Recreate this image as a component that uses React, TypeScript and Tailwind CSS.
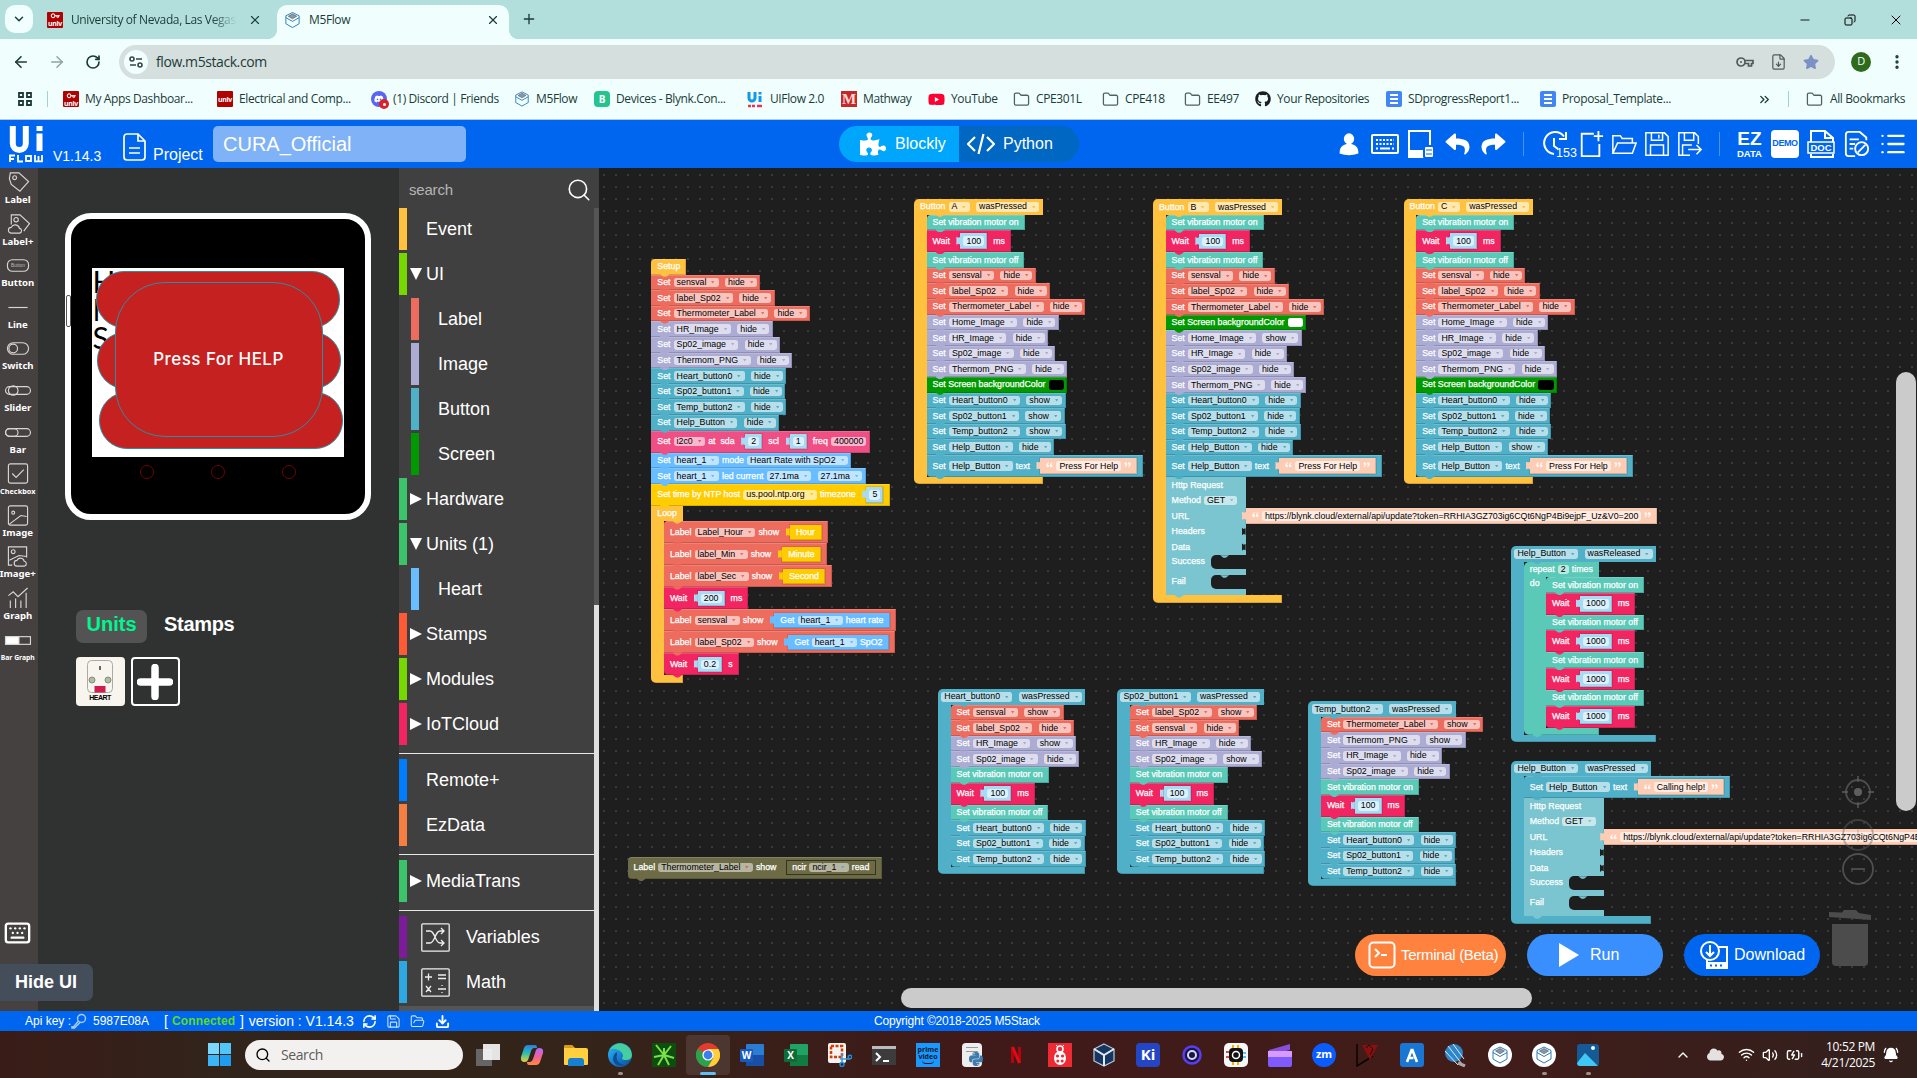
import React, { type ReactNode } from "react";
import {
  ArrowLeft, ArrowRight, RotateCw, X, Plus, Minus, ChevronDown, ChevronUp, Copy, KeyRound, FileDown, Folder, FolderOpen, Save,
  Search, Keyboard, List, Download, RefreshCw, Wifi, Volume2, BellRing, BatteryCharging, Key, EllipsisVertical, ChevronsRight,
} from "lucide-react";
import { FaPuzzlePiece, FaGithub, FaDiscord, FaYoutube, FaStar, FaReply, FaShare, FaPython, FaCloud } from "react-icons/fa";

/* ---------- Blockly palette ---------- */
type Hue = "event" | "red" | "purple" | "teal" | "vib" | "wait" | "green" | "i2c" | "heart" | "ntp" | "http" | "off";
const HUES: Record<Hue, { bg: string; fg: string }> = {
  event: { bg: "bg-[#ffc23f]", fg: "text-[#ffc23f]" },
  red: { bg: "bg-[#ed6c5e]", fg: "text-[#ed6c5e]" },
  purple: { bg: "bg-[#ababd4]", fg: "text-[#ababd4]" },
  teal: { bg: "bg-[#4fb0c8]", fg: "text-[#4fb0c8]" },
  vib: { bg: "bg-[#5bc9b8]", fg: "text-[#5bc9b8]" },
  wait: { bg: "bg-[#f02562]", fg: "text-[#f02562]" },
  green: { bg: "bg-[#009a00]", fg: "text-[#009a00]" },
  i2c: { bg: "bg-[#ef4f85]", fg: "text-[#ef4f85]" },
  heart: { bg: "bg-[#67bdff]", fg: "text-[#67bdff]" },
  ntp: { bg: "bg-[#ffcc00]", fg: "text-[#ffcc00]" },
  http: { bg: "bg-[#7ac5cf]", fg: "text-[#7ac5cf]" },
  off: { bg: "bg-[#6c6b45]", fg: "text-[#e0604f]" },
};
const BEVEL = "shadow-[inset_-1px_-1px_0_rgba(0,0,0,0.16),inset_0_1px_0_rgba(255,255,255,0.16)]";

const L = ({ children }: { children: ReactNode }) => (
  <span className="whitespace-pre text-white first-of-type:ml-[2.7px] last-of-type:mr-[2.7px] [-webkit-text-stroke:0.25px_white]">{children}</span>
);
const F = ({ children, c = "teal", arrow = true, next = false, dim = false }: { children: ReactNode; c?: Hue; arrow?: boolean; next?: boolean; dim?: boolean }) => (
  <span className={`flex h-[9.6px] items-center whitespace-pre rounded-[2.4px] pl-[3px] text-black ${dim ? "bg-white/50" : "bg-white/60"} ${next ? "ml-[3.2px]" : ""} ${arrow ? "" : "pr-[3px]"}`}>
    {children}
    {arrow && (
      <svg viewBox="0 0 4 3" className={`ml-[5px] mr-[4px] h-[2.6px] w-[3.4px] ${HUES[c].fg}`}><path d="M0 0h4L2 3z" fill="currentColor" /></svg>
    )}
  </span>
);
const Val = ({ children, bg, pad = "px-[3px]" }: { children: ReactNode; bg: string; pad?: string }) => (
  <span className={`relative ml-[7.4px] mr-[2.8px] flex h-[15.6px] items-center gap-[3px] ${pad} ${bg} shadow-[inset_-1px_-1px_0_rgba(0,0,0,0.15),0_0_0_0.6px_rgba(0,0,0,0.15)]`}>
    <i className={`absolute -left-[4px] top-[3.4px] h-[8px] w-[4.2px] [clip-path:polygon(0_0,50%_12%,100%_0,100%_100%,50%_88%,0_100%)] ${bg}`} />
    {children}
  </span>
);
const Num = ({ children }: { children: ReactNode }) => (
  <Val bg="bg-[#a7dbf4]"><span className="flex h-[9.6px] items-center rounded-[2.4px] bg-white/60 px-[3.2px] text-black">{children}</span></Val>
);
const Quote = ({ d = false }: { d?: boolean }) => (
  <svg viewBox="0 0 8 6" className={`h-[5.5px] w-[7px] -translate-y-[1px] ${d ? "rotate-180" : ""}`}>
    <path d="M3.2.2C1.3.8.3 2 .3 3.8.3 5 1 5.8 2 5.8c.9 0 1.5-.6 1.5-1.4 0-.9-.6-1.4-1.5-1.4C2 2 2.500 1.300 3.500.9zM7.200.2C5.300.8 4.300 2 4.300 3.800c0 1.200.7 2 1.700 2 .9 0 1.500-.6 1.500-1.400 0-.9-.6-1.400-1.500-1.400C6 2 6.500 1.300 7.500.9z" fill="#fff" fillOpacity=".85" />
  </svg>
);
const Txt = ({ children }: { children: ReactNode }) => (
  <Val bg="bg-[#fccdb4]" pad="px-[6px]"><Quote /><span className="flex h-[9.6px] items-center whitespace-pre rounded-[2.4px] bg-white/60 px-[3px] text-black">{children}</span><Quote d /></Val>
);
const Knob = ({ bg, at = "left-[9px]" }: { bg: string; at?: string }) => (
  <i className={`absolute top-full z-10 -mt-px h-[3.2px] w-[9px] ${at} ${bg} [clip-path:polygon(0_0,100%_0,100%_30%,64%_100%,36%_100%,0_30%)]`} />
);
const Row = ({ c, children, tall = false, top = false, end = false }: { c: Hue; children: ReactNode; tall?: boolean; top?: boolean; end?: boolean }) => (
  <div className={`relative flex items-center gap-[3.1px] px-[3.3px] ${tall ? "h-[22px]" : "h-[15.6px]"} ${HUES[c].bg} ${BEVEL} ${top ? "rounded-tl-[4px]" : ""} ${end ? "rounded-bl-[4px]" : ""}`}>
    {children}
    <Knob bg={HUES[c].bg} />
  </div>
);

/* "name:state" pairs become "Set [name] [state]" rows */
const SetRow = ({ c, v }: { c: Hue; v: string }) => {
  const [name, state] = v.split(":");
  return <Row c={c}><L>Set</L><F c={c}>{name}</F><F c={c} next>{state}</F></Row>;
};
const Sets = ({ c, items }: { c: Hue; items: string[] }) => <>{items.map((v) => <SetRow key={v} c={c} v={v} />)}</>;
const Vib = ({ on }: { on: boolean }) => <Row c="vib"><L>{on ? "Set vibration motor on" : "Set vibration motor off"}</L></Row>;
const Wait = ({ n = "100", u = "ms" }: { n?: string; u?: string }) => <Row c="wait" tall><L>Wait</L><Num>{n}</Num><L>{u}</L></Row>;
const Buzz = () => <><Vib on /><Wait /><Vib on={false} /></>;
const ScreenBg = ({ white = false }: { white?: boolean }) => (
  <Row c="green"><L>Set Screen backgroundColor</L><span className={`h-[9.600px] w-[15.500px] rounded-[2.4px] ${white ? "bg-white" : "bg-black"}`} /></Row>
);
const HelpText = ({ t }: { t: string }) => <Row c="teal" tall><L>Set</L><F>Help_Button</F><L>text</L><Txt>{t}</Txt></Row>;

const Wrap = ({ c, head, children, top = true, inner = false, side }: { c: Hue; head: ReactNode; children: ReactNode; top?: boolean; inner?: boolean; side?: ReactNode }) => (
  <div className="relative grid w-fit grid-cols-[auto_auto]">
    <div className={`relative col-span-2 flex h-[15.6px] w-fit items-center gap-[3.1px] px-[3.3px] ${HUES[c].bg} ${top ? "rounded-tl-[5px]" : ""}`}>
      {head}
      <Knob bg={HUES[c].bg} at={inner ? "left-[31px]" : "left-[21.500px]"} />
    </div>
    <div className="col-span-2 flex">
      <div className={`shrink-0 ${inner ? "w-[22.300px]" : "w-[12.600px]"} ${HUES[c].bg}`}>{side}</div>
      <div className="flex flex-col items-start [&>*:first-child]:rounded-tl-[4px] [&>*:last-child]:rounded-bl-[4px]">{children}</div>
    </div>
    <div className={`relative h-[7.2px] overflow-visible rounded-bl-[5px] ${HUES[c].bg} shadow-[inset_-1px_-1px_0_rgba(0,0,0,0.16)]`}>
      <div className="invisible flex h-0 items-center gap-[3.1px] overflow-hidden px-[3.3px]" aria-hidden>{head}</div>
      {inner && <Knob bg={HUES[c].bg} />}
    </div>
  </div>
);

const URL_TEXT = "https://blynk.cloud/external/api/update?token=RRHIA3GZ703ig6CQt6NgP4Bi9ejpF_Uz&V0=200";
const Slot = ({ name }: { name: string }) => (
  <div className="flex h-[20.100px] flex-col">
    <div className="flex h-[13.4px]">
      <div className="w-[45.500px] bg-[#7ac5cf] pl-[3.300px] pt-[2px]"><L>{name}</L></div>
      <div className="relative h-[13.4px] flex-1 overflow-hidden bg-[#7ac5cf]">
        <div className="h-full w-[60px] rounded-l-[5px] bg-[#1e1e1e]" />
        <i className="absolute left-[9px] top-0 h-[2.500px] w-[9px] bg-[#7ac5cf] [clip-path:polygon(0_0,100%_0,64%_100%,36%_100%)]" />
      </div>
    </div>
    <div className="h-[6.7px] bg-[#7ac5cf]" />
  </div>
);
const Http = () => (
  <div className="relative flex w-[80px] flex-col overflow-visible">
    {["Http Request", "Method", "URL", "Headers", "Data"].map((n) => (
      <div key={n} className="relative flex h-[15.600px] items-center gap-[3px] bg-[#7ac5cf] px-[3.3px]">
        <L>{n}</L>
        {n === "Method" && <F c="http">GET</F>}
        {(n === "Headers" || n === "Data") && <i className="absolute right-0 top-[3.500px] h-[8px] w-[4px] bg-[#1e1e1e] [clip-path:polygon(0_0,50%_20%,100%_10%,100%_90%,50%_80%,0_100%)]" />}
        {n === "URL" && <div className="absolute left-[73px] top-0 z-20 tracking-[-0.015px]"><Txt>{URL_TEXT}</Txt></div>}
      </div>
    ))}
    <Slot name="Success" />
    <Slot name="Fail" />
    <Knob bg="bg-[#7ac5cf]" />
  </div>
);

const At = ({ x, children }: { x: string; children: ReactNode }) => <div className={`absolute w-max ${x}`}>{children}</div>;
const ev = (b: string) => <><L>Button</L><F c="event">{b}</F><F c="event" next>wasPressed</F></>;
const bev = (b: string, e = "wasPressed") => <><F>{b}</F><F next>{e}</F></>;
const ShowVal = ({ l, children }: { l: string; children: ReactNode }) => <Row c="red" tall><L>Label</L><F c="red">{l}</F><L>show</L>{children}</Row>;
const Reset = ["sensval:hide", "label_Sp02:hide", "Thermometer_Label:hide"];
const Buttons = ["Heart_button0:hide", "Sp02_button1:hide", "Temp_button2:hide"];

const Scripts = () => (
  <div className="absolute inset-0 font-['Liberation_Sans',sans-serif] text-[8.8px] leading-none">
    <At x="left-[52.3px] top-[91px]">
      <div className="flex flex-col items-start">
        <Row c="event" top><L>Setup</L></Row>
        <Sets c="red" items={Reset} />
        <Sets c="purple" items={["HR_Image:hide", "Sp02_image:hide", "Thermom_PNG:hide"]} />
        <Sets c="teal" items={[...Buttons, "Help_Button:hide"]} />
        <Row c="i2c" tall><L>Set</L><F c="i2c">i2c0</F><L>at  sda</L><Num>2</Num><L>scl</L><Num>1</Num><L>freq</L><F arrow={false}>400000</F></Row>
        <Row c="heart"><L>Set</L><F c="heart">heart_1</F><L>mode</L><F c="heart">Heart Rate with SpO2</F></Row>
        <Row c="heart"><L>Set</L><F c="heart">heart_1</F><L>led current</L><F c="heart">27.1ma</F><F c="heart" next>27.1ma</F></Row>
        <Row c="ntp" tall><L>Set time by NTP host</L><F c="ntp">us.pool.ntp.org</F><L>timezone</L><Num>5</Num></Row>
        <Wrap c="event" top={false} head={<L>Loop</L>}>
          <ShowVal l="Label_Hour"><Val pad="px-[3.800px]" bg="bg-[#ffcc00]"><L>Hour</L></Val></ShowVal>
          <ShowVal l="label_Min"><Val pad="px-[3.800px]" bg="bg-[#ffcc00]"><L>Minute</L></Val></ShowVal>
          <ShowVal l="label_Sec"><Val pad="px-[3.800px]" bg="bg-[#ffcc00]"><L>Second</L></Val></ShowVal>
          <Wait n="200" />
          <ShowVal l="sensval"><Val pad="px-[3.800px]" bg="bg-[#67bdff]"><L>Get</L><F c="heart">heart_1</F><L>heart rate</L></Val></ShowVal>
          <ShowVal l="label_Sp02"><Val pad="px-[3.800px]" bg="bg-[#67bdff]"><L>Get</L><F c="heart">heart_1</F><L>SpO2</L></Val></ShowVal>
          <Wait n="0.2" u="s" />
        </Wrap>
      </div>
    </At>
    <At x="left-[315px] top-[31px]">
      <Wrap c="event" head={ev("A")}>
        <Buzz /><Sets c="red" items={Reset} />
        <Sets c="purple" items={["Home_Image:hide", "HR_Image:hide", "Sp02_image:hide", "Thermom_PNG:hide"]} />
        <ScreenBg />
        <Sets c="teal" items={["Heart_button0:show", "Sp02_button1:show", "Temp_button2:show", "Help_Button:hide"]} />
        <HelpText t="Press For Help" />
      </Wrap>
    </At>
    <At x="left-[554px] top-[31.3px]">
      <Wrap c="event" head={ev("B")}>
        <Buzz /><Sets c="red" items={Reset} />
        <ScreenBg white />
        <Sets c="purple" items={["Home_Image:show", "HR_Image:hide", "Sp02_image:hide", "Thermom_PNG:hide"]} />
        <Sets c="teal" items={[...Buttons, "Help_Button:hide"]} />
        <HelpText t="Press For Help" />
        <Http />
      </Wrap>
    </At>
    <At x="left-[804.6px] top-[31px]">
      <Wrap c="event" head={ev("C")}>
        <Buzz /><Sets c="red" items={Reset} />
        <Sets c="purple" items={["Home_Image:hide", "HR_Image:hide", "Sp02_image:hide", "Thermom_PNG:hide"]} />
        <ScreenBg />
        <Sets c="teal" items={[...Buttons, "Help_Button:show"]} />
        <HelpText t="Press For Help" />
      </Wrap>
    </At>
    <At x="left-[912.2px] top-[378px]">
      <Wrap c="teal" head={bev("Help_Button", "wasReleased")}>
        <Wrap c="vib" inner side={<div className="pl-[3.300px] pt-[2px]"><L>do</L></div>} head={<><L>repeat</L><F arrow={false}>2</F><L>times</L></>}>
          <Vib on /><Wait n="1000" /><Vib on={false} /><Wait n="1000" /><Vib on /><Wait n="1000" /><Vib on={false} /><Wait n="1000" />
        </Wrap>
      </Wrap>
    </At>
    <At x="left-[912.2px] top-[592.7px]">
      <Wrap c="teal" head={bev("Help_Button")}><HelpText t="Calling help!" /><Http /></Wrap>
    </At>
    <At x="left-[339px] top-[521px]">
      <Wrap c="teal" head={bev("Heart_button0")}>
        <Sets c="red" items={["sensval:show", "label_Sp02:hide"]} /><Sets c="purple" items={["HR_Image:show", "Sp02_image:hide"]} />
        <Buzz /><Sets c="teal" items={Buttons} />
      </Wrap>
    </At>
    <At x="left-[518.2px] top-[521px]">
      <Wrap c="teal" head={bev("Sp02_button1")}>
        <Sets c="red" items={["label_Sp02:show", "sensval:hide"]} /><Sets c="purple" items={["HR_Image:hide", "Sp02_image:show"]} />
        <Buzz /><Sets c="teal" items={Buttons} />
      </Wrap>
    </At>
    <At x="left-[709.3px] top-[533.3px]">
      <Wrap c="teal" head={bev("Temp_button2")}>
        <Sets c="red" items={["Thermometer_Label:show"]} /><Sets c="purple" items={["Thermom_PNG:show", "HR_Image:hide", "Sp02_image:hide"]} />
        <Buzz /><Sets c="teal" items={Buttons} />
      </Wrap>
    </At>
    <At x="left-[28.6px] top-[688.7px]">
      <Row c="off" tall top end>
        <L>Label</L><F c="off" dim>Thermometer_Label</F><L>show</L>
        <span className="ml-[6px] mr-[2.700px] flex h-[15.600px] items-center gap-[3px] border border-[#34341f] bg-[#6c6b45] px-[3px]"><L>ncir</L><F c="teal" dim>ncir_1</F><L>read</L></span>
      </Row>
    </At>
  </div>
);

/* ---------- Browser chrome ---------- */
const UI_FONT = "font-['Open_Sans',sans-serif] tracking-[-0.38px]";
const Unlv = ({ k = true }: { k?: boolean }) => (
  <span className="flex h-4 w-4 shrink-0 flex-col items-center justify-center rounded-[1px] bg-[#b10202] text-[7px] font-bold leading-[7px] tracking-[-0.3px] text-white">
    {k && <Key className="h-2 w-2.5 rotate-45" strokeWidth={3} />}unlv
  </span>
);
const Cube = ({ s = "h-[18px] w-[17px]" }: { s?: string }) => (
  <svg viewBox="0 0 18 18" className={`shrink-0 ${s}`} fill="none" stroke="#2a7ab8">
    <path d="M9 1l7 3.500v8.500l-7 4-7-4V4.500z" /><path d="M2 6.500l7 4 7-4" /><path d="M9 2.500l4.500 2.500L9 7.700 4.500 5z" fill="#8b98a3" stroke="#56626e" strokeWidth=".7" />
  </svg>
);
const UiMark = () => (
  <svg viewBox="0 0 17 17" className="h-[17px] w-[17px] shrink-0"><path d="M2 1v6a3 3 0 006 0V1M13 5v6" fill="none" stroke="#1397e8" strokeWidth="3" /><rect x="11.500" y="1" width="3" height="2.500" fill="#1397e8" /><path d="M1 15h3m1 0h3m2 0h5" stroke="#e8315b" strokeWidth="2.500" /></svg>
);
const GDoc = () => <span className="flex h-4 w-4 shrink-0 flex-col items-center justify-center gap-[2px] rounded-[2px] bg-[#4285f4]"><i className="h-[2px] w-2 bg-white" /><i className="h-[2px] w-2 bg-white" /><i className="h-[2px] w-2 bg-white" /></span>;
const Fold = () => <Folder className="h-[17px] w-[17px] shrink-0 text-[#4c6361]" strokeWidth={1.8} />;

const BOOKMARKS: { w: string; icon: ReactNode; t: string }[] = [
  { w: "w-[154px]", icon: <Unlv />, t: "My Apps Dashboar..." },
  { w: "w-[154px]", icon: <Unlv k={false} />, t: "Electrical and Comp..." },
  { w: "w-[143px]", icon: <span className="relative flex h-4 w-4 items-center justify-center rounded-full bg-[#5865f2]"><FaDiscord className="h-2.5 w-2.5 text-white" /><i className="absolute -bottom-0.5 -right-0.5 flex h-[10px] w-[10px] items-center justify-center rounded-full bg-[#d8232a]"><i className="h-[3px] w-[3px] rounded-full bg-white" /></i></span>, t: "(1) Discord | Friends" },
  { w: "w-[80px]", icon: <Cube s="h-4 w-4" />, t: "M5Flow" },
  { w: "w-[153px]", icon: <span className="flex h-4 w-4 items-center justify-center rounded-[4px] bg-[#23c48e] text-[10px] font-bold tracking-normal text-white">B</span>, t: "Devices - Blynk.Con..." },
  { w: "w-[94px]", icon: <UiMark />, t: "UIFlow 2.0" },
  { w: "w-[87px]", icon: <span className="flex h-4 w-4 items-center justify-center bg-[#c62828] font-['Liberation_Serif',serif] text-[15px] font-bold text-[#ffd9d9]">M</span>, t: "Mathway" },
  { w: "w-[85px]", icon: <FaYoutube className="h-[17px] w-[17px] text-[#ff0033]" />, t: "YouTube" },
  { w: "w-[89px]", icon: <Fold />, t: "CPE301L" },
  { w: "w-[82px]", icon: <Fold />, t: "CPE418" },
  { w: "w-[71px]", icon: <Fold />, t: "EE497" },
  { w: "w-[131px]", icon: <FaGithub className="h-4 w-4 text-[#1b1f23]" />, t: "Your Repositories" },
  { w: "w-[154px]", icon: <GDoc />, t: "SDprogressReport1..." },
  { w: "w-[160px]", icon: <GDoc />, t: "Proposal_Template..." },
];

const Chrome = () => (
  <div className={`shrink-0 text-[12px] text-[#1c3b38] ${UI_FONT}`}>
    <div className="flex h-[39px] bg-[#b2dfdb]">
      <div className="ml-[5px] mt-[5px] flex h-7 w-7 items-center justify-center rounded-[10px] bg-[#f0fffe]"><ChevronDown className="h-3.5 w-3.5" strokeWidth={2.500} /></div>
      <div className="ml-[14px] flex h-[39px] w-[221px] items-center">
        <Unlv /><span className="ml-2 w-[166px] overflow-hidden whitespace-nowrap [mask-image:linear-gradient(to_right,black_85%,transparent)]">University of Nevada, Las Vegas</span>
        <X className="ml-[11px] h-3.5 w-3.5" strokeWidth={2} />
      </div>
      <div className="relative ml-[9px] mt-[5px] flex h-[34px] w-[232px] items-center rounded-t-[10px] bg-[#f0fffe] pb-1 pl-[7px]">
        <i className="absolute -left-[10px] bottom-0 h-[10px] w-[10px] bg-[radial-gradient(circle_at_0_0,#b2dfdb_10px,#f0fffe_10.500px)]" />
        <i className="absolute -right-[10px] bottom-0 h-[10px] w-[10px] bg-[radial-gradient(circle_at_100%_0,#b2dfdb_10px,#f0fffe_10.500px)]" />
        <Cube /><span className="ml-2">M5Flow</span><X className="ml-auto mr-[9px] h-3.5 w-3.5" strokeWidth={2} />
      </div>
      <Plus className="ml-[12px] mt-[11px] h-4 w-4" strokeWidth={2} />
      <div className="ml-auto mr-[13px] flex items-center gap-[32px] text-black">
        <Minus className="h-3.5 w-3.5" strokeWidth={1.500} />
        <Copy className="h-3 w-3 -scale-x-100" strokeWidth={2} />
        <X className="h-4 w-4" strokeWidth={1.500} />
      </div>
    </div>
    <div className="flex h-[45px] items-center bg-[#f0fffe]">
      <ArrowLeft className="ml-3 h-[18px] w-[18px]" strokeWidth={2.200} /><ArrowRight className="ml-[18px] h-[18px] w-[18px] text-[#8da5a3]" strokeWidth={2} /><RotateCw className="ml-[19px] h-4 w-4" strokeWidth={2.500} />
      <div className="ml-[18px] flex h-[34px] w-[1716px] items-center rounded-full bg-[#d5dfde] pl-[5px] pr-4">
        <span className="flex h-6 w-6 items-center justify-center rounded-full bg-[#f0fffe]">
          <svg viewBox="0 0 14 14" className="h-3.5 w-3.5" fill="none" stroke="#3a4443" strokeWidth="1.600"><circle cx="3" cy="4" r="2" /><path d="M7 4h6M1 10h6" /><circle cx="11" cy="10" r="2" /></svg>
        </span>
        <span className="ml-2 text-[14px] tracking-[-0.420px]">flow.m5stack.com</span>
        <div className="ml-auto flex items-center gap-[16px] text-[#4f5b5a]">
          <svg viewBox="0 0 18 12" className="h-[12px] w-[18px]" fill="none" stroke="currentColor" strokeWidth="1.700"><circle cx="5" cy="6" r="4" /><path d="M9 4.500h8v3h-1.500V10h-3V7.500H9" /><circle cx="5" cy="6" r="1" fill="currentColor" stroke="none" /></svg>
          <FileDown className="h-[18px] w-[17px]" strokeWidth={1.700} /><FaStar className="h-4 w-4 text-[#7b91c4]" />
        </div>
      </div>
      <span className="ml-4 flex h-5 w-5 items-center justify-center rounded-full bg-[#2f6b1d] text-[11px] text-white">D</span>
      <EllipsisVertical className="ml-[17px] h-[18px] w-[18px]" strokeWidth={2.500} />
    </div>
    <div className="flex h-[36px] items-center border-b border-[#b7c9d2] bg-[#f0fffe] pb-[5px]">
      <svg viewBox="0 0 14 14" className="ml-[18px] h-[14px] w-[14px]" fill="none" stroke="#1c3b38" strokeWidth="1.800"><path d="M1 1h4v4H1zM9 1h4v4H9zM1 9h4v4H1zM9 9h4v4H9z" /></svg>
      <i className="ml-[15px] mr-[15px] h-4 w-px bg-[#a4d3cf]" />
      {BOOKMARKS.map((b) => <div key={b.t} className={`flex shrink-0 items-center gap-1.5 whitespace-nowrap ${b.w}`}>{b.icon}<span>{b.t}</span></div>)}
      <ChevronsRight className="ml-[57px] h-[15px] w-[15px]" strokeWidth={2.200} />
      <i className="ml-[16px] mr-[17px] h-4 w-px bg-[#a4d3cf]" />
      <Fold /><span className="ml-[7px] whitespace-nowrap">All Bookmarks</span>
    </div>
  </div>
);

/* ---------- UIFlow header ---------- */
const SV = ({ x, children }: { x: string; children: ReactNode }) => <svg viewBox="0 0 28 28" className={`h-7 shrink-0 ${x}`} fill="none" stroke="#fff" strokeWidth="2">{children}</svg>;
const Header = () => (
  <header className="flex h-[48px] shrink-0 items-center bg-[#0066ef] font-['Liberation_Sans',sans-serif] text-white">
    <svg viewBox="0 0 34 38" className="ml-[9px] h-[38px] w-[34px]" fill="none" stroke="#fff">
      <path d="M3.800 1v17.500a5.500 5.500 0 0013 0V1" strokeWidth="6" /><path d="M30.500 8.500V26" strokeWidth="6" /><path d="M27.500 3.500h6" strokeWidth="5" />
      <path d="M1 37v-6.500h5M1 34h4M9 30v6.500h5M17 31h5v5h-5zM26 30v6.300h7V30M29.500 36v-5" strokeWidth="1.800" />
    </svg>
    <span className="ml-[10px] w-[50px] pt-[23px] text-[14px] leading-none">V1.14.3</span>
    <svg viewBox="0 0 23 28" className="ml-[20px] mt-1.5 h-[28px] w-[23px]" fill="none" stroke="#fff" strokeWidth="1.700"><path d="M15 1H4a3 3 0 00-3 3v20a3 3 0 003 3h15a3 3 0 003-3V8zM15 1v7h7M6 15h11M6 20h11" /></svg>
    <span className="ml-[7px] w-[50px] pt-[22px] text-[16px] leading-none">Project</span>
    <div className="ml-[10px] flex h-9 w-[253px] items-center rounded-[5px] bg-[#80b2f7] pl-[10px] text-[20px]">CURA_Official</div>
    <div className="ml-[373px] flex h-9 w-[240px] overflow-hidden rounded-full text-[16px]">
      <div className="flex w-[120px] items-center bg-[#00a6fb] pl-[21px]"><FaPuzzlePiece className="h-[26px] w-[26px]" /><span className="ml-[9px]">Blockly</span></div>
      <div className="flex flex-1 items-center bg-[#0068c2] pl-[8px]">
        <svg viewBox="0 0 28 24" className="h-[24px] w-[28px]" fill="none" stroke="#fff" strokeWidth="2.200"><path d="M8 5l-7 7 7 7M20 5l7 7-7 7M16.500 2l-5 20" /></svg>
        <span className="ml-[8px]">Python</span>
      </div>
    </div>
    <div className="ml-[258px] flex items-center">
      <SV x="w-[24px]"><ellipse cx="14" cy="8" rx="6" ry="6.500" fill="#fff" stroke="none" /><path d="M3 25c0-8 4-11 11-11s11 3 11 11q-11 4-22 0z" fill="#fff" stroke="none" /></SV>
      <SV x="ml-[10px] w-[28px]"><rect x="1" y="5" width="26" height="18" rx="1" /><path d="M5 10h18M5 14h18" strokeDasharray="2 1.500" strokeWidth="2.200" /><path d="M5 18.500h2m2 0h10m2 0h2" /></SV>
      <SV x="ml-[8px] w-[28px]"><path d="M2 1h21v26H2z" /><path d="M2 21h21v6H2z" fill="#fff" /><rect x="17" y="16" width="10" height="12" rx="2" fill="#fff" stroke="#0066ef" /><path d="M19 20h6M19 24h6" stroke="#0066ef" strokeWidth="1.200" /></SV>
      <FaReply className="ml-[10px] h-[24px] w-[25px]" /><FaShare className="ml-[11px] h-[24px] w-[25px]" />
      <i className="ml-[17px] h-6 w-px bg-[#4d92f3]" />
      <div className="relative ml-[18px] w-[36px]">
        <SV x="w-[28px]"><path d="M12 24A11 11 0 1122 6.500M24 2v7h-7M12 8v8l4 3" /></SV>
        <span className="absolute left-[14px] top-[17px] text-[12.500px] leading-none">153</span>
      </div>
      <SV x="w-[26px]"><path d="M17 3H4v24h19V14M22 0v11M17 5.500h10" /></SV>
      <SV x="ml-[7px] w-[26px]"><path d="M2 24V5h8l2 3h11v5M2 24l5-11h20l-4 11z" strokeWidth="1.600" /></SV>
      <SV x="ml-[7px] w-[26px]"><path d="M2 2h20l4 4v20H2zM8 2v8h12V2M16 4v4M7 26V15h14v11" strokeWidth="1.600" /></SV>
      <SV x="ml-[7px] w-[26px]"><path d="M14 26H2V2h17l4 4v8M8 2v8h10V2M6 26V15h10M12 20h14M21 15l5 5-5 5" strokeWidth="1.600" /></SV>
      <i className="ml-[16px] h-6 w-px bg-[#4d92f3]" />
      <span className="ml-[16px] flex w-[27px] flex-col items-center leading-none"><b className="text-[19px] leading-[16px]">EZ</b><span className="mt-[2px] text-[9.500px] font-bold leading-[9px]">DATA</span></span>
      <span className="ml-[8px] flex h-[28px] w-[28px] items-center justify-center rounded-[4px] bg-white text-[9px] font-bold tracking-[-0.400px] text-[#0066ef]">DEMO</span>
      <div className="relative ml-[8px] w-[28px]">
        <SV x="w-[28px]"><path d="M4 12V1h14l8 7v4M4 24v3h22v-3M18 1v7h8" /><rect x="1" y="12" width="26" height="11" fill="#0066ef" strokeWidth="1.500" /></SV>
        <span className="absolute left-0 top-[13px] w-full text-center text-[9.500px] font-bold leading-none">DOC</span>
      </div>
      <SV x="ml-[9px] w-[26px]"><path d="M12 27H5a3 3 0 01-3-3V4a3 3 0 013-3h12l7 6v3M6 9h10M6 14h6M6 19h4" /><circle cx="19" cy="19" r="7" /><path d="M15 23l8-8" /></SV>
      <List className="ml-[9px] h-[30px] w-[28px]" strokeWidth={2} />
    </div>
  </header>
);

/* ---------- Left side ---------- */
const tool = "fill-none stroke-[#d8d6d5] [stroke-width:1.2]";
const TOOLS: { t: string; s?: string; d: ReactNode }[] = [
  { t: "Label", d: <><path d="M5 8l1-6h9l10 9-9 10-9-7z" /><circle cx="10.500" cy="7" r="2" /></> },
  { t: "Label+", d: <><path d="M7 12V2h9l10 9-6 8" /><circle cx="12" cy="7" r="2.300" /><path d="M7 21a3 3 0 010-6 4.500 4.500 0 018.500 1 2.600 2.600 0 01.5 5z" /></> },
  { t: "Button", d: <><rect x="3" y="6" width="22" height="12" rx="5" /><text x="14" y="14" fontSize="5" textAnchor="middle" stroke="none" fill="#bbb">Button</text></> },
  { t: "Line", d: <path d="M4 12h20" /> },
  { t: "Switch", d: <><rect x="3" y="6" width="22" height="12" rx="6" /><circle cx="9" cy="12" r="4.500" /></> },
  { t: "Slider", d: <><rect x="1" y="8" width="26" height="8" rx="4" /><circle cx="9" cy="12" r="5" /></> },
  { t: "Bar", d: <><rect x="1" y="8" width="26" height="8" rx="4" /><rect x="1" y="8" width="13" height="8" rx="4" /></> },
  { t: "Checkbox", s: "text-[7.300px]", d: <><rect x="4" y="2" width="20" height="20" rx="2" /><path d="M8 12l4 4 8-8" /></> },
  { t: "Image", d: <><rect x="4" y="2" width="20" height="20" rx="2" /><circle cx="9" cy="9" r="1.500" /><path d="M5 21l12-9 6 1" /></> },
  { t: "Image+", d: <><path d="M8 21H4V2h19v11" /><circle cx="9" cy="7" r="2" /><path d="M5 16l10-5 8 1" /><path d="M13 22a3 3 0 010-6 4 4 0 017.500 1 2.600 2.600 0 01.5 5z" /></> },
  { t: "Graph", d: <path d="M6 22v-8M11.500 22V12M17 22v-8M22.500 22V6M4 9l5-4 5 5 10-9" /> },
  { t: "Bar Graph", s: "text-[6.800px]", d: <><rect x="1" y="8" width="26" height="8" /><rect x="1" y="8" width="14" height="8" fill="#fff" /></> },
];

const Simulator = () => (
  <div className="relative flex h-[307px] w-[306px] flex-col items-center rounded-[26px] border-[6px] border-white bg-black pt-[49px]">
    <i className="absolute -left-[5px] top-[76px] h-[32px] w-[5px] rounded-[2px] border border-[#555] bg-white" />
    <div className="relative h-[189px] w-[252px] overflow-hidden bg-white">
      <div className="absolute left-[1px] top-[-1px] flex flex-col font-['Lato',sans-serif] text-[30px] leading-[28px] text-black"><span>H</span><span>M</span><span>S</span></div>
      <i className="absolute left-[4px] top-[3px] h-[57px] w-[244px] rounded-[28px] border border-[#2a8fa0] bg-[#c62121]" />
      <i className="absolute left-[5px] top-[64px] h-[57px] w-[244px] rounded-[28px] border border-[#2a8fa0] bg-[#c62121]" />
      <i className="absolute left-[7px] top-[124px] h-[57px] w-[244px] rounded-[28px] border border-[#2a8fa0] bg-[#c62121]" />
      <div className="absolute left-[23px] top-[14px] flex h-[155px] w-[208px] items-center justify-center rounded-[50px] border border-[#2a8fa0] bg-[#c62121] font-['Inter',sans-serif] text-[17px] font-medium tracking-[0.450px] text-white">Press For HELP</div>
    </div>
    <div className="mt-[8px] flex gap-[57px]">{[0, 1, 2].map((i) => <i key={i} className="h-[14px] w-[14px] rounded-full border-[1.500px] border-[#6d0505]" />)}</div>
  </div>
);

type Cat = { t: string; bg: string; arrow?: "d" | "r"; sub?: boolean; icon?: ReactNode };
const CATS: (Cat | null)[] = [
  { t: "Event", bg: "bg-[#ffc23f]" },
  { t: "UI", bg: "bg-[#76d800]", arrow: "d" },
  { t: "Label", bg: "bg-[#ed6c5e]", sub: true },
  { t: "Image", bg: "bg-[#ababd4]", sub: true },
  { t: "Button", bg: "bg-[#4fb0c8]", sub: true },
  { t: "Screen", bg: "bg-[#009a00]", sub: true },
  { t: "Hardware", bg: "bg-[#3cc46b]", arrow: "r" },
  { t: "Units (1)", bg: "bg-[#3cc46b]", arrow: "d" },
  { t: "Heart", bg: "bg-[#67bdff]", sub: true },
  { t: "Stamps", bg: "bg-[#ff5a36]", arrow: "r" },
  { t: "Modules", bg: "bg-[#76d800]", arrow: "r" },
  { t: "IoTCloud", bg: "bg-[#f02562]", arrow: "r" },
  null,
  { t: "Remote+", bg: "bg-[#007dff]" },
  { t: "EzData", bg: "bg-[#f57e42]" },
  null,
  { t: "MediaTrans", bg: "bg-[#3cc46b]", arrow: "r" },
  null,
  { t: "Variables", bg: "bg-[#7b1c99]", icon: <path d="M5 8h4c5 0 5 12 10 12h4M5 20h4c5 0 5-12 10-12h4M20 5l3 3-3 3M20 17l3 3-3 3" /> },
  { t: "Math", bg: "bg-[#2ea8e0]", icon: <path d="M4 9h7M7.500 5.500v7M17 7h8M17 10.500h8M5 18l5 6M10 18l-5 6M17 21h8M21 17v1M21 24v1" /> },
];

const LeftSide = () => (
  <div className="relative flex shrink-0 font-['Liberation_Sans',sans-serif] text-white">
    <div className="flex w-[37.500px] flex-col items-center bg-[#464141] pr-[2px]">
      {TOOLS.map((x) => (
        <div key={x.t} className="flex h-[41.600px] w-full shrink-0 flex-col items-center pt-[3px]">
          <svg viewBox="0 0 28 24" className={`h-[23px] w-[28px] shrink-0 ${tool}`}>{x.d}</svg>
          <span className={`whitespace-nowrap font-['Noto_Sans',sans-serif] font-bold leading-[12px] ${x.s ?? "text-[9.600px]"}`}>{x.t}</span>
        </div>
      ))}
      <Keyboard className="mt-[252px] h-[28px] w-[33px] shrink-0" strokeWidth={2} />
    </div>
    <div className="w-[361.500px] bg-[#303231]">
      <div className="pl-[27px] pt-[45px]"><Simulator /></div>
      <div className="mt-[90px] flex pl-[38.500px] text-[20px] font-bold leading-none">
        <span className="flex h-[33px] w-[71px] items-start justify-center rounded-[7px] bg-[#535353] pt-[4px] text-[#00f78f]">Units</span>
        <span className="ml-[17px] pt-[4px] tracking-[-0.300px]">Stamps</span>
      </div>
      <div className="mt-[14px] flex gap-[6px] pl-[38px]">
        <div className="flex h-[49px] w-[49px] flex-col items-center rounded-[4px] bg-[#f8f4ee] pt-[3px]">
          <svg viewBox="0 0 26 33" className="h-[33px] w-[26px]"><rect x=".5" y=".5" width="25" height="32" rx="4" fill="none" stroke="#aaa" /><rect x="12" y="6" width="2" height="4" fill="#666" /><circle cx="5" cy="20" r="3" fill="#aabf9a" stroke="#888" /><circle cx="21" cy="20" r="3" fill="#aabf9a" stroke="#888" /><rect x="7.500" y="26" width="11" height="6.500" fill="#d01c4f" /></svg>
          <b className="text-[7px] leading-[9px] tracking-[-0.500px] text-black">HEART</b>
        </div>
        <div className="flex h-[49px] w-[49px] items-center justify-center rounded-[4px] border-2 border-white"><svg viewBox="0 0 36 36" className="h-9 w-9 shrink-0"><path d="M18 3.500v29M3.500 18h29" stroke="#fff" strokeWidth="7.500" strokeLinecap="round" /></svg></div>
      </div>
    </div>
    <div className="flex w-[200px] flex-col bg-[#404040]">
      <div className="flex h-[40px] shrink-0 items-center pl-[10px] text-[15px] text-[#b5b5b5]"><span className="mt-1 tracking-[-0.200px]">search</span><Search className="ml-auto mr-[7px] mt-[4px] h-[26px] w-[26px] text-white" strokeWidth={1.500} /></div>
      <div className="flex min-h-0 flex-1">
        <div className="flex w-[195px] flex-col">
          {CATS.map((c, i) => c === null ? <hr key={i} className="mb-[5px] mt-[5px] h-px shrink-0 border-0 bg-[#e8e8e8]" /> : (
            <div key={c.t} className={`mb-[3px] flex h-[42px] shrink-0 items-center text-[18px] ${c.sub ? "pl-[12px]" : ""}`}>
              <i className={`h-full w-[8px] ${c.bg}`} />
              <span className="flex w-[19px] items-center pl-[3px]">
                {c.arrow && <svg viewBox="0 0 12 12" className={`h-[12px] w-[12px] ${c.arrow === "d" ? "rotate-90" : ""}`}><path d="M0 0l12 6-12 6z" fill="#fff" /></svg>}
              </span>
              {c.icon && <svg viewBox="0 0 29 29" className="-ml-[5px] mr-[16px] h-[29px] w-[29px]" fill="none" stroke="#eee" strokeWidth="1.300"><rect x=".8" y=".8" width="27.400" height="27.400" rx="1" />{c.icon}</svg>}
              {c.t}
            </div>
          ))}
          <div className="flex-1 bg-[#555]" />
        </div>
        <div className="flex-1 bg-[#555] pt-[397px]"><div className="h-full bg-[#dfdfdf]" /></div>
      </div>
    </div>
    <div className="absolute bottom-[10px] left-0 flex h-[37px] w-[93px] items-center rounded-r-[7px] bg-[#434e5a] pl-[15px] text-[18px] font-bold">Hide UI</div>
  </div>
);

const Canvas = () => (
  <main className="relative flex-1 overflow-hidden bg-[#1e1e1e] bg-[radial-gradient(circle,#3a3a3a_0.700px,transparent_1.100px)] bg-[length:12px_12px] bg-[position:-1px_1px]">
    <Scripts />
    <svg viewBox="0 0 34 120" className="absolute right-[42px] top-[606px] z-30 h-[120px] w-[34px] opacity-90" fill="none" stroke="#666" strokeOpacity=".75" strokeWidth="1.800">
      <circle cx="17" cy="18" r="12" /><circle cx="17" cy="18" r="4" fill="#666" stroke="none" /><path d="M17 2v6M17 28v6M1 18h6M27 18h6" />
      <circle cx="17" cy="61" r="15" strokeOpacity=".5" /><path d="M10 61h14M17 54v14" strokeOpacity=".25" /><circle cx="17" cy="95" r="15" /><path d="M10 95h14" />
    </svg>
    <svg viewBox="0 0 42 58" className="absolute right-[46px] top-[741px] h-[58px] w-[42px]" fill="#4c4c4c"><path d="M0 3l13 .500L15 1h12l3 3 12 2v5L0 8zM3 15h36v38a4 4 0 01-4 4H7a4 4 0 01-4-4z" /></svg>
    <div className="absolute right-[97px] top-[766px] z-30 flex gap-[21px] font-['Liberation_Sans',sans-serif] text-[16px] text-white">
      <div className="flex h-[42px] w-[151px] items-center rounded-full bg-[#ff833f] pl-[13px] text-[15px]"><svg viewBox="0 0 28 28" className="h-7 w-7 shrink-0" fill="none" stroke="#fff" strokeWidth="2"><rect x="1.500" y="1.500" width="25" height="25" rx="4" /><path d="M7 8l4 4-4 4M13 14h6" /></svg><span className="ml-[5px] whitespace-nowrap tracking-[-0.300px]">Terminal (Beta)</span></div>
      <div className="flex h-[42px] w-[136px] items-center rounded-full bg-[#3a8fff] pl-[32px]"><svg viewBox="0 0 20 24" className="h-6 w-5"><path d="M0 0l20 12L0 24z" fill="#fff" /></svg><span className="ml-[11px]">Run</span></div>
      <div className="flex h-[42px] w-[136px] items-center rounded-full bg-[#0066ef] pl-[16px]"><svg viewBox="0 0 28 28" className="h-7 w-7 shrink-0" fill="none" stroke="#fff" strokeWidth="2"><path d="M17 6h10v21H7v-8" /><path d="M7 22h20v5H7z" fill="#fff" /><path d="M10 24.500h2m3 0h2m3 0h2" stroke="#0066ef" /><circle cx="10" cy="10" r="9" fill="#0066ef" /><path d="M10 4v11M6 11l4 4 4-4" /></svg><span className="ml-[6px]">Download</span></div>
    </div>
    <div className="absolute right-px top-[204px] h-[439px] w-[20px] rounded-full bg-[#cbcbcb]" />
    <div className="absolute left-[302px] top-[820px] h-[20px] w-[631px] rounded-full bg-[#cbcbcb]" />
  </main>
);

const Status = () => (
  <div className="relative flex h-[20px] shrink-0 items-center bg-[#0066ef] pl-[25px] font-['Liberation_Sans',sans-serif] text-[12px] text-white">
    <span className="w-[46px] whitespace-nowrap">Api key :</span>
    <svg viewBox="0 0 16 16" className="h-4 w-4" fill="none" stroke="#a9cbff" strokeWidth="1.400"><circle cx="10.500" cy="5.500" r="4" /><path d="M7.500 8L2 14.500M9 9.500L3.500 15H1v-2" /></svg>
    <span className="ml-[6px] w-[71px]">5987E08A</span>
    <span className="text-[14px]">[</span><b className="mx-[4px] w-[64px] whitespace-nowrap text-[12px] font-bold tracking-[0.150px] text-[#5fdc1e]">Connected</b><span className="text-[14px]">]</span>
    <span className="ml-[5px] w-[106px] whitespace-nowrap text-[14px]">version : V1.14.3</span>
    <RefreshCw className="ml-[7px] h-[15px] w-[15px]" strokeWidth={2.500} /><Save className="ml-[9px] h-[15px] w-[15px] text-[#cfe1ff]" strokeWidth={1.700} /><FolderOpen className="ml-[9px] h-[15px] w-[15px] text-[#cfe1ff]" strokeWidth={1.700} /><Download className="ml-[10px] h-[15px] w-[15px]" strokeWidth={3} />
    <span className="absolute left-[874px] text-[12px] tracking-[-0.180px]">Copyright ©2018-2025 M5Stack</span>
  </div>
);

/* ---------- Taskbar ---------- */
const S = ({ children }: { children: ReactNode }) => <svg viewBox="0 0 24 24" className="h-6 w-6">{children}</svg>;
const Box = ({ c, children }: { c: string; children: ReactNode }) => <span className={`flex h-6 w-6 items-center justify-center ${c}`}>{children}</span>;
const APPS: ReactNode[] = [
  <S><rect x="0" y="6" width="16" height="17" fill="#666" /><rect x="7" y="1" width="17" height="16" fill="#fff" fillOpacity=".88" /></S>,
  <S><defs><linearGradient id="cpl" x2="0" y2="1"><stop stopColor="#2a7de1" /><stop offset=".5" stopColor="#2fc0b0" /><stop offset="1" stopColor="#f0d030" /></linearGradient><linearGradient id="cpr" x2="0" y2="1"><stop stopColor="#b06bff" /><stop offset=".5" stopColor="#f0609a" /><stop offset="1" stopColor="#ff8a3c" /></linearGradient></defs><path d="M8 2h7q2 0 2 3h-3q-2 0-3 3l-3 9q-1 2-3 2-5 0-4-5l3-9q1-3 4-3z" fill="url(#cpl)" /><path d="M16 22H9q-2 0-2-3h3q2 0 3-3l3-9q1-2 3-2 5 0 4 5l-3 9q-1 3-4 3z" fill="url(#cpr)" /></S>,
  <S><path d="M0 4q0-2 2-2h6l3 3h11q2 0 2 2v14q0 1-1 1H1q-1 0-1-1z" fill="#ffcf3f" /><path d="M0 4q0-2 2-2h6l2 3H0z" fill="#d99a1a" /><path d="M4 23v-5q0-3 3-3h10q3 0 3 3v5z" fill="#1680d0" /></S>,
  <S><defs><linearGradient id="ed" x2="1" y2="1"><stop stopColor="#2cc2e8" /><stop offset=".5" stopColor="#1a7fd4" /><stop offset="1" stopColor="#0c4a8c" /></linearGradient></defs><circle cx="12" cy="12" r="12" fill="url(#ed)" /><path d="M2 6a12 12 0 0122 6q0 5-6 5-4 0-4-2 2-2 0-5-4-5-12-4z" fill="#45cfa0" /><path d="M9 12q-2 8 8 10-9 3-12-5 0-6 4-8z" fill="#0b4f93" /></S>,
  <Box c="bg-[#0d4d0d]"><S><path d="M12 12L4 2M12 12L19 3M12 12L2 14M12 12l10 3M12 12L6 22M12 12l5 10M12 12V5" stroke="#7be04c" strokeWidth="2" /></S></Box>,
  <S><circle cx="12" cy="12" r="12" fill="#e33b2e" /><path d="M12 12L1.600 6A12 12 0 0012 24l5-9z" fill="#2ba24c" /><path d="M12 24a12 12 0 0010.400-18H12l5.200 9z" fill="#fdd03b" /><circle cx="12" cy="12" r="5.600" fill="#fff" /><circle cx="12" cy="12" r="4.400" fill="#3b7ded" /></S>,
  <S><rect x="6" y="1" width="18" height="22" rx="1" fill="#2b7cd3" /><rect x="6" y="12" width="18" height="11" fill="#174ea6" /><rect x="0" y="6" width="13" height="13" rx="1" fill="#185abd" /><text x="6.500" y="16" fontSize="10" fontWeight="bold" fill="#fff" textAnchor="middle">W</text></S>,
  <S><rect x="6" y="1" width="18" height="22" rx="1" fill="#21a366" /><rect x="6" y="12" width="18" height="11" fill="#107c41" /><rect x="0" y="6" width="13" height="13" rx="1" fill="#0f6b38" /><text x="6.500" y="16" fontSize="10" fontWeight="bold" fill="#fff" textAnchor="middle">X</text></S>,
  <S><rect x="0" y="0" width="18" height="20" rx="2" fill="#f3f3f3" /><rect x="3" y="3" width="11" height="11" fill="none" stroke="#d83b01" strokeWidth="2.500" strokeDasharray="3 1.500" /><path d="M14 10v10M12 16h10" stroke="#3a9ad9" strokeWidth="1.500" /><circle cx="14" cy="21.500" r="2" fill="none" stroke="#1c8fe0" strokeWidth="1.500" /><circle cx="22" cy="14" r="1.800" fill="none" stroke="#1c8fe0" strokeWidth="1.500" /></S>,
  <S><rect y="3" width="24" height="19" rx="1" fill="#3c3c3c" /><rect y="3" width="24" height="3" fill="#bbb" /><path d="M4 10l4 4-4 4M11 18h6" fill="none" stroke="#fff" strokeWidth="2" /></S>,
  <Box c="flex-col bg-[#1a98ff] text-[7px] font-bold leading-[7px] text-[#081a2b]"><span>prime</span><span>video</span><span className="h-1 w-3 rounded-b-full border-b border-[#081a2b]" /></Box>,
  <span className="relative h-6 w-5 rounded-sm bg-[#eee]"><i className="absolute left-1 top-2 h-px w-3 bg-[#999]" /><i className="absolute left-1 top-1 h-px w-3 bg-[#999]" /><FaPython className="absolute bottom-0 left-1.5 h-4 w-4 text-[#3f7cac]" /></span>,
  <S><path d="M8.500 4v16M15.500 4v16" stroke="#b1060f" strokeWidth="3" /><path d="M8.500 4l7 16" stroke="#e50914" strokeWidth="3" /></S>,
  <Box c="bg-[#ee2b35]"><S><circle cx="12" cy="6" r="3" fill="none" stroke="#fff" strokeWidth="1.500" /><ellipse cx="12" cy="15" rx="6" ry="7" fill="#fff" /><circle cx="9.500" cy="13" r="1.600" fill="#ee2b35" /><circle cx="14.500" cy="13" r="1.600" fill="#ee2b35" /><circle cx="9.800" cy="18" r="1.500" fill="#ee2b35" /><circle cx="14.200" cy="18" r="1.500" fill="#ee2b35" /><path d="M8 2l2 2M16 2l-2 2" stroke="#fff" /></S></Box>,
  <S><path d="M12 1l10 5v12l-10 5L2 18V6z" fill="#16365f" stroke="#b9cbe0" strokeWidth="1.200" /><path d="M2 6l10 6 10-6M12 12v11" stroke="#dfe9f5" strokeWidth="2" fill="none" /></S>,
  <Box c="rounded-[4px] bg-[#2546c4] text-[15px] font-bold text-white">Ki</Box>,
  <S><circle cx="12" cy="12" r="8.500" fill="#18183f" stroke="#5b3df5" strokeWidth="2.500" /><circle cx="12" cy="12" r="4" fill="none" stroke="#d9d4ff" strokeWidth="2" /></S>,
  <S><rect width="24" height="24" rx="5" fill="#f7f7f7" /><rect x="5" y="5" width="14" height="14" rx="4" fill="#111" /><circle cx="12" cy="12" r="3.500" fill="none" stroke="#fff" strokeWidth="1.500" /><path d="M9 2v3M14 2v3M9 19v3M14 19v3" stroke="#f5b400" strokeWidth="2" /><path d="M2 9h3M2 14h3" stroke="#e5483b" strokeWidth="2" /><path d="M19 10h3M19 14h3" stroke="#4fc3f7" strokeWidth="2" /></S>,
  <S><path d="M1 7L22 1v6L1 12z" fill="#8a4fd8" /><rect x="0" y="8" width="24" height="16" rx="2" fill="#7f5bff" /><rect x="0" y="8" width="24" height="6" fill="#d79bff" /></S>,
  <Box c="rounded-full bg-[#0b5cff] text-[11px] font-bold text-white">zm</Box>,
  <S><path d="M1 1v22L17 13" fill="none" stroke="#050505" strokeWidth="1.500" /><path d="M6 2h16l-8 15z" fill="#8c0f0f" /><path d="M10 5l3-3 4 4-3 6" stroke="#111" fill="none" /></S>,
  <Box c="rounded-[3px] bg-[#1976d2]"><svg viewBox="0 0 24 24" className="h-6 w-6"><path d="M12 6l5 13M12 6L7 19M9.500 15h4" fill="none" stroke="#fff" strokeWidth="2.600" /></svg></Box>,
  <S><circle cx="10" cy="10" r="9" fill="#2f86c9" /><path d="M4 3l14 18M1 8l13 14M9 1l11 15" stroke="#d9ecf8" strokeWidth="1" /><path d="M14 20l7 3" stroke="#aaa" strokeWidth="3" /></S>,
  <Box c="rounded-full bg-white"><Cube s="h-[18px] w-[18px]" /></Box>,
  <Box c="rounded-full bg-white"><Cube s="h-[18px] w-[18px]" /></Box>,
  <S><rect x="1" y="1" width="22" height="22" rx="3" fill="#155a94" /><path d="M1 20L9 10l13 13H4q-3 0-3-3z" fill="#3fc8f5" /><circle cx="17" cy="5" r="2" fill="#dff" /></S>,
];
const MARKS: Record<number, string> = { 3: "w-[5px] bg-[#9a8f8c]", 5: "w-4 bg-[#5fc0f3]", 24: "w-[5px] bg-[#9a8f8c]", 25: "w-[5px] bg-[#9a8f8c]" };

const Taskbar = () => (
  <div className="flex h-[47px] shrink-0 items-center bg-[linear-gradient(90deg,#3a1c17_0%,#31241a_12%,#34241a_30%,#3f1a18_50%,#421c19_75%,#32201d_100%)] font-['Open_Sans',sans-serif]">
    <div className="ml-[208px] grid h-[23px] w-[23px] shrink-0 grid-cols-2 gap-[1px]">{["bg-[#7bd6fb]", "bg-[#52c4f8]", "bg-[#3ab5f5]", "bg-[#1e9df0]"].map((c) => <i key={c} className={c} />)}</div>
    <div className="ml-[14px] mr-[3px] flex h-[30px] w-[218px] shrink-0 items-center rounded-full bg-[#f3f1f0] pl-[10px] text-[14px] tracking-[-0.400px] text-[#5d5a59]"><Search className="h-4 w-4 text-black" strokeWidth={2} /><span className="ml-[10px]">Search</span></div>
    {APPS.map((a, i) => (
      <div key={i} className={`relative flex h-10 w-[44px] shrink-0 items-center justify-center ${i === 5 ? "rounded-[4px] bg-white/10" : ""}`}>
        {a}{MARKS[i] && <i className={`absolute bottom-0 h-[3px] rounded-full ${MARKS[i]}`} />}
      </div>
    ))}
    <div className="ml-auto flex items-center pr-[18px] text-white">
      <ChevronUp className="h-4 w-4" /><FaCloud className="ml-[16px] h-[15px] w-[17px] text-[#e5e1e0]" /><Wifi className="ml-[14px] h-[17px] w-[17px]" /><Volume2 className="ml-[7px] h-[16px] w-[16px]" /><BatteryCharging className="ml-[8px] h-[18px] w-[17px]" />
      <div className="ml-[7px] w-[65px] text-right text-[12px] leading-[16px] tracking-[-0.350px]"><div>10:52 PM</div><div>4/21/2025</div></div>
      <BellRing className="ml-[8px] h-[16px] w-[16px]" fill="white" />
    </div>
  </div>
);

export default function App() {
  return (
    <div className="flex h-[1078px] w-[1917px] flex-col overflow-hidden bg-[#1e1e1e]">
      <Chrome />
      <Header />
      <div className="flex h-[843px] shrink-0"><LeftSide /><Canvas /></div>
      <Status />
      <Taskbar />
    </div>
  );
}
